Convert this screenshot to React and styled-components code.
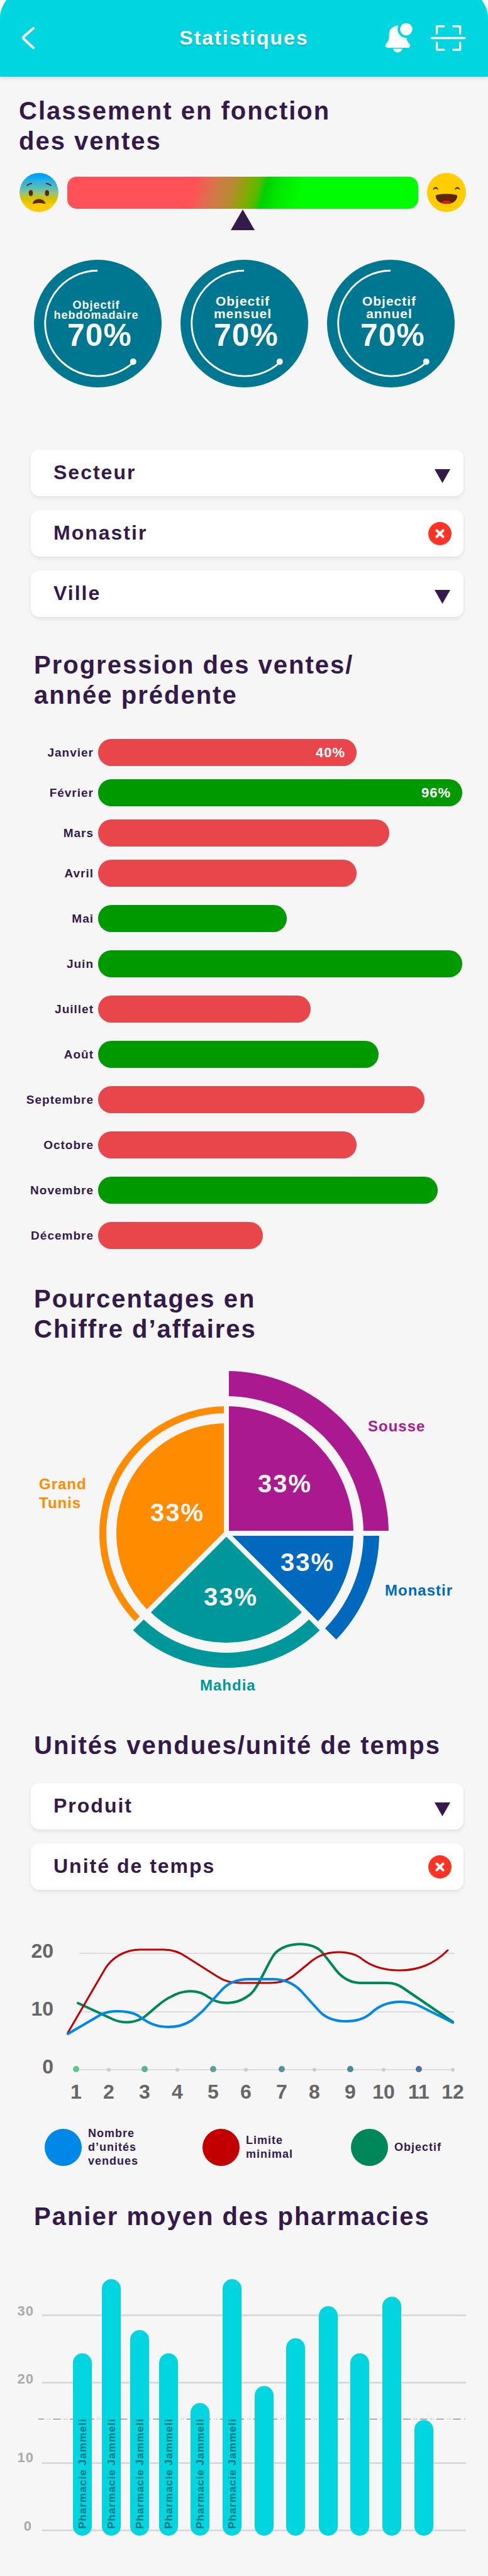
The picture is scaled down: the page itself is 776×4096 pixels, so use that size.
import React from 'react';
import styled, { createGlobalStyle } from 'styled-components';

const ink = '#34194b';
const paper = '#f6f6f6';
const cyan = '#00d5e0';
const font = '"Liberation Sans", Arial, sans-serif';

const GlobalStyle = createGlobalStyle`
  *, *::before, *::after { box-sizing: border-box; }
  body {
    margin: 0;
    background: #ffffff;
    color: ${ink};
    font-family: ${font};
    font-weight: 700;
  }
`;

const Page = styled.div`
  background: ${paper};
  clip-path: inset(-17px 0 0 0 round 46px 46px 0 0);
  padding-bottom: 16px;
`;

/* ---------- header ---------- */

const Header = styled.header`
  display: grid;
  grid-template-columns: 1fr auto 1fr;
  align-items: center;
  height: 122px;
  padding: 0 34px 2px;
  background: ${cyan};
  color: #ffffff;
  box-shadow: 0 2px 6px rgba(0, 0, 0, 0.12);
`;

const Title = styled.h1`
  margin: 0;
  font-size: 32px;
  line-height: 36px;
  letter-spacing: 2px;
  text-shadow: 0 2px 3px rgba(0, 0, 0, 0.12);
`;

const Actions = styled.div`
  display: flex;
  align-items: center;
  justify-content: flex-end;
  gap: 27px;
`;

const IconButton = styled.button`
  display: flex;
  padding: 0;
  border: 0;
  background: none;
  color: inherit;
  cursor: pointer;
`;

/* ---------- shared ---------- */

const Heading = styled.h2`
  margin: ${(p) => p.$top}px 0 0;
  padding-left: ${(p) => (p.$wide ? 30 : 54)}px;
  font-size: 40px;
  line-height: 48px;
  letter-spacing: 2px;
`;

const Chart = styled.svg`
  display: block;
  width: 100%;
  height: auto;
  margin-top: ${(p) => p.$top}px;
  font-family: ${font};
  font-weight: 700;
`;

/* ---------- gauge ---------- */

const Gauge = styled.div`
  display: grid;
  grid-template-columns: 62px 1fr 62px;
  align-items: center;
  gap: 14px;
  margin-top: 27px;
  padding: 0 35px 0 31px;
`;

const Track = styled.div`
  position: relative;
  height: 51px;
  border-radius: 15px;
  background: linear-gradient(
    106deg,
    #ff5157 36%,
    #d4774a 42%,
    #b58b30 47%,
    #84aa00 51%,
    #50be00 54%,
    #00d000 56%,
    #00e800 60%,
    #00fc00 66%
  );
`;

const Pointer = styled.svg`
  position: absolute;
  top: 100%;
  left: 50%;
  margin: 1px 0 0 -19px;
`;

/* ---------- goals ---------- */

const Goals = styled.div`
  display: flex;
  justify-content: space-between;
  margin-top: 76px;
  padding: 0 53px 0 54px;
`;

const Goal = styled.div`
  display: grid;
  width: 203px;
  height: 203px;
  border-radius: 50%;
  background: #007791;
  color: #ffffff;
  text-align: center;

  > * { grid-area: 1 / 1; }
`;

const GoalText = styled.div`
  display: flex;
  flex-direction: column;
  justify-content: flex-end;
  padding-bottom: 59px;
`;

const GoalLabel = styled.span`
  padding-right: 5px;
  font-size: ${(p) => (p.$small ? 18 : 21)}px;
  line-height: ${(p) => (p.$small ? 16 : 20)}px;
  letter-spacing: 1px;
  white-space: pre-line;
`;

const GoalValue = styled.strong`
  padding-left: 6px;
  color: ${paper};
  font-size: 50px;
  line-height: 48px;
  letter-spacing: 1px;
`;

/* ---------- filters ---------- */

const Filters = styled.div`
  display: grid;
  gap: 22px;
  margin-top: ${(p) => p.$top}px;
  padding: 0 39px 0 49px;
`;

const Field = styled.div`
  display: grid;
  align-items: center;
  height: 74px;
  border-radius: 14px;
  background: #ffffff;
  box-shadow: 0 3px 6px rgba(0, 0, 0, 0.09);

  > * { grid-area: 1 / 1; }
`;

const controlText = `
  width: 100%;
  height: 100%;
  padding: 0 72px 2px 36px;
  border: 0;
  outline: 0;
  border-radius: 14px;
  background: none;
  color: ${ink};
  font: 700 32px ${font};
  letter-spacing: 2px;
`;

const Select = styled.select`
  ${controlText}
  appearance: none;
`;

const Input = styled.input`
  ${controlText}
`;

const Arrow = styled.svg`
  justify-self: end;
  margin: 10px 21px 0 0;
  pointer-events: none;
`;

const Clear = styled.button`
  display: grid;
  place-items: center;
  justify-self: end;
  width: 37px;
  height: 37px;
  margin-right: 19px;
  padding: 0;
  border: 0;
  border-radius: 50%;
  background: #fd3425;
  cursor: pointer;
`;

/* ---------- monthly bars ---------- */

const Months = styled.ul`
  margin: 46px 0 0;
  padding: 0 41px 1px 0;
  list-style: none;
`;

const Month = styled.li`
  display: grid;
  grid-template-columns: 149px 1fr;
  align-items: center;
  gap: 7px;

  & + & { margin-top: 29px; }
  &:nth-child(n + 2):nth-child(-n + 4) { margin-top: 21px; }
`;

const MonthName = styled.span`
  font-size: 19px;
  line-height: 22px;
  letter-spacing: 1px;
  text-align: right;
`;

const Bar = styled.div`
  display: flex;
  align-items: center;
  justify-content: flex-end;
  height: 43px;
  padding-right: 18px;
  border-radius: 21px;
  background: ${(p) => (p.$up ? '#009a00' : '#e9464c')};
  color: #ffffff;
  font-size: 22px;
  letter-spacing: 1px;
`;

/* ---------- legend ---------- */

const Legend = styled.ul`
  display: grid;
  grid-template-columns: 251fr 236fr 218fr;
  margin: 31px 0 0;
  padding: 0 0 0 71px;
  list-style: none;
`;

const LegendItem = styled.li`
  display: flex;
  align-items: center;
  gap: 10px;
  height: 66px;
  font-size: 18px;
  line-height: 22px;
  letter-spacing: 1px;
  white-space: pre-line;
`;

const Swatch = styled.span`
  flex: none;
  width: 59px;
  height: 59px;
  border-radius: 50%;
  background: ${(p) => p.$color};
`;

/* ---------- data ---------- */

const goals = [
  { label: 'Objectif\nhebdomadaire', small: true },
  { label: 'Objectif\nmensuel' },
  { label: 'Objectif\nannuel' },
];

const months = [
  { name: 'Janvier', width: 71, text: '40%' },
  { name: 'Février', width: 100, up: true, text: '96%' },
  { name: 'Mars', width: 80 },
  { name: 'Avril', width: 71 },
  { name: 'Mai', width: 51.8, up: true },
  { name: 'Juin', width: 100, up: true },
  { name: 'Juillet', width: 58.4 },
  { name: 'Août', width: 77, up: true },
  { name: 'Septembre', width: 89.7 },
  { name: 'Octobre', width: 71 },
  { name: 'Novembre', width: 93.2, up: true },
  { name: 'Décembre', width: 45.2 },
];

const regions = [
  { name: ['Sousse'], color: '#ab1991', from: 0, to: 90, r: 202, ring: [218, 258], value: [410, 203], label: [585, 106] },
  { name: ['Monastir'], color: '#0069bd', from: 90, to: 135, r: 202, ring: [218, 243], value: [446, 328], label: [612, 367] },
  { name: ['Mahdia'], color: '#00979a', from: 135, to: 225, r: 174, ring: [190, 214], value: [324, 383], label: [318, 518] },
  { name: ['Grand', 'Tunis'], color: '#ff8c00', from: 225, to: 360, r: 175, ring: [191, 202], value: [239, 249], label: [62, 198] },
];

const ticks = [
  { x: 121, color: '#5cc68e' },
  { x: 173 },
  { x: 230, color: '#5ab391' },
  { x: 282 },
  { x: 339, color: '#56a295' },
  { x: 391 },
  { x: 448, color: '#529497' },
  { x: 500 },
  { x: 557, color: '#4f8699' },
  { x: 610 },
  { x: 666, color: '#4e739c' },
  { x: 720 },
];

const legend = [
  { text: 'Nombre\nd’unités\nvendues', color: '#0088e8' },
  { text: 'Limite\nminimal', color: '#c20000' },
  { text: 'Objectif', color: '#008759' },
];

const pharmacies = [
  { x: 116, top: 142, name: 'Pharmacie Jammeli' },
  { x: 162, top: 24, name: 'Pharmacie Jammeli' },
  { x: 207, top: 105, name: 'Pharmacie Jammeli' },
  { x: 253, top: 142, name: 'Pharmacie Jammeli' },
  { x: 303, top: 221, name: 'Pharmacie Jammeli' },
  { x: 354, top: 24, name: 'Pharmacie Jammeli' },
  { x: 405, top: 194 },
  { x: 455, top: 118 },
  { x: 507, top: 67 },
  { x: 557, top: 142 },
  { x: 608, top: 52 },
  { x: 659, top: 248 },
];

/* ---------- pieces ---------- */

const BackIcon = () => (
  <svg width="21" height="37" viewBox="0 0 21 37" fill="none" stroke="currentColor" strokeWidth="4" strokeLinecap="round" strokeLinejoin="round">
    <path d="M19 3 4 16Q2 18 4 20L19 34" />
  </svg>
);

const BellIcon = () => (
  <svg width="45" height="48" viewBox="33 30 188 201" fill="currentColor">
    <path d="M123 49C85 52 62 75 61 103V125C60 148 51 160 40 172C31 184 38 197 52 197H186C200 197 206 184 197 172C186 160 177 150 177 132A58 58 0 0 1 123 49Z" />
    <circle cx="175" cy="74" r="41" />
    <path d="M88 204H149C146 220 133 229 118 229C103 229 91 220 88 204Z" />
  </svg>
);

const ScanIcon = () => (
  <svg width="58" height="43" viewBox="333 38 244 182" fill="none" stroke="currentColor" strokeWidth="14" strokeLinecap="round" strokeLinejoin="round">
    <path d="M344 129H566M377 98V50H425M487 50H534V98M377 160V208H425M487 208H534V160" />
  </svg>
);

const WorriedFace = () => (
  <svg width="62" height="62" viewBox="20 17 262 262" role="img" aria-label="Mauvais">
    <defs>
      <linearGradient id="worried" x1="0" y1="0" x2="0" y2="1">
        <stop offset="0.08" stopColor="#00a2f8" />
        <stop offset="0.2" stopColor="#2aafe0" />
        <stop offset="0.38" stopColor="#55bcba" />
        <stop offset="0.52" stopColor="#98c27c" />
        <stop offset="0.65" stopColor="#d0c400" />
        <stop offset="0.85" stopColor="#ffcb00" />
      </linearGradient>
    </defs>
    <circle cx="151" cy="148" r="131" fill="url(#worried)" />
    <path d="M71 101Q84 89 101 88M200 88Q218 90 231 101" fill="none" stroke="#5b260b" strokeWidth="8" strokeLinecap="round" />
    <ellipse cx="96" cy="152" rx="14" ry="20" fill="#5b260b" />
    <ellipse cx="205" cy="152" rx="14" ry="20" fill="#5b260b" />
    <path d="M108 222C113 202 131 192 151 192C171 192 189 202 195 222C192 226 186 224 182 223C162 217 140 217 120 223C114 225 107 226 108 222Z" fill="#5b260b" />
  </svg>
);

const HappyFace = () => (
  <svg width="62" height="62" viewBox="0 0 262 262" role="img" aria-label="Excellent">
    <circle cx="131" cy="131" r="131" fill="#ffcd00" />
    <path d="M40 115C41 103 48 95 58 95S75 103 76 115Q67 106 58 106T40 115ZM186 115C187 103 194 95 204 95S221 103 222 115Q213 106 204 106T186 115Z" fill="#5b260b" />
    <path d="M58 156Q58 148 68 147Q131 135 194 147Q204 148 204 156C200 190 170 208 131 208S62 190 58 156Z" fill="#5b260b" />
    <path d="M95 201C103 190 117 186 131 186S159 190 167 201Q150 208 131 208T95 201Z" fill="#dd1a1f" />
  </svg>
);

function SelectField({ label }) {
  return (
    <Field>
      <Select aria-label={label}>
        <option>{label}</option>
      </Select>
      <Arrow width="25" height="22" viewBox="0 0 50 44" fill={ink} aria-hidden="true">
        <path d="M0 0H50L25 44Z" />
      </Arrow>
    </Field>
  );
}

function ClearableField({ label, value }) {
  return (
    <Field>
      <Input type="text" aria-label={label} defaultValue={value} />
      <Clear type="button" aria-label={`Effacer ${value}`}>
        <svg width="15" height="15" viewBox="0 0 30 30" stroke="#ffffff" strokeWidth="8" strokeLinecap="round">
          <path d="M5 5 25 25M25 5 5 25" />
        </svg>
      </Clear>
    </Field>
  );
}

const CX = 360;
const CY = 268;

const at = (r, deg) => {
  const a = (deg * Math.PI) / 180;
  return `${(CX + r * Math.sin(a)).toFixed(2)} ${(CY - r * Math.cos(a)).toFixed(2)}`;
};

const slice = ({ from, to, r }) => `M${CX} ${CY}L${at(r, from)}A${r} ${r} 0 0 1 ${at(r, to)}Z`;

const ring = ({ from, to, ring: [a, b] }) =>
  `M${at(a, from)}L${at(b, from)}A${b} ${b} 0 0 1 ${at(b, to)}L${at(a, to)}A${a} ${a} 0 0 0 ${at(a, from)}Z`;

function RegionPie() {
  return (
    <Chart $top={33} viewBox="0 0 776 540">
      {regions.map((region) => (
        <path key={region.color} d={slice(region) + ring(region)} fill={region.color} />
      ))}
      {regions.map((region) => (
        <path key={region.color} d={`M${CX} ${CY}L${at(275, region.from)}`} stroke={paper} strokeWidth="8" />
      ))}
      {regions.map((region) => (
        <g key={region.color}>
          <text x={region.value[0]} y={region.value[1]} fill={paper} fontSize="40" letterSpacing="2">33%</text>
          {region.name.map((line, i) => (
            <text key={line} x={region.label[0]} y={region.label[1] + i * 30} fill={region.color} fontSize="24" letterSpacing="1">
              {line}
            </text>
          ))}
        </g>
      ))}
    </Chart>
  );
}

function UnitsChart() {
  return (
    <Chart $top={65} viewBox="0 0 776 280">
      <g fill="#666666" fontSize="32">
        {[20, 10, 0].map((n, i) => (
          <text key={n} x="85" y={43 + i * 92} textAnchor="end">{n}</text>
        ))}
        {ticks.map((t, i) => (
          <text key={t.x} x={t.x} y="267" textAnchor="middle">{i + 1}</text>
        ))}
      </g>
      <path d="M126 36H723M126 129H723M126 221H723" stroke="#dcdcdc" strokeWidth="2" />
      {ticks.map((t) => (
        <circle key={t.x} cx={t.x} cy={t.color ? 220 : 221} r={t.color ? 5 : 3} fill={t.color || '#cccccc'} />
      ))}
      <g fill="none" strokeLinecap="round" strokeLinejoin="round">
        <path
          stroke="#008759"
          strokeWidth="4"
          d="M124 115L180 141C194 147 210 147 225 140C236 134 256 111 272 105C290 94 311 94 324 101C331 105 337 109 341 111C356 117 376 116 391 106C398 102 403 97 407 90C417 75 424 56 435 39C450 17 500 14 515 38C523 47 529 57 539 68C548 77 560 83 574 83H616C626 83 634 86 641 91L720 145"
        />
        <path
          stroke="#c20000"
          strokeWidth="3"
          d="M108 162L168 59C178 44 197 30 223 30H260C273 30 286 34 297 42L346 73C355 79 366 83 381 83H428C446 83 458 79 470 69L497 47C509 38 523 34 538 34C554 34 568 38 577 46C592 57 612 63 635 63C666 63 690 53 712 31"
        />
        <path
          stroke="#0088e8"
          strokeWidth="4"
          d="M108 164L161 133C169 129 178 128 187 128C199 128 210 130 218 134C223 137 229 142 235 145C244 150 255 153 267 153C281 153 295 149 304 143C311 138 316 133 322 128L351 96C361 84 376 77 396 77H433C452 77 466 83 478 95L507 127C516 137 531 144 551 144C566 144 579 140 589 132C598 123 613 113 637 113C649 113 659 115 668 120L720 146"
        />
      </g>
    </Chart>
  );
}

function BasketChart() {
  return (
    <Chart $top={52} viewBox="0 0 776 480">
      <g fill="#aaaaab" fontSize="22" letterSpacing="1" textAnchor="end">
        <text x="54" y="82">30</text>
        <text x="54" y="190">20</text>
        <text x="54" y="315">10</text>
        <text x="51" y="424">0</text>
      </g>
      <path d="M68 81.500H740M68 188.500H740M68 316.500H740M68 423.500H740" stroke="#dadada" strokeWidth="3" strokeLinecap="round" />
      <path d="M61 246.500H740" stroke="#75638a" strokeDasharray="12 5.500 1 2.500 1 4.500" strokeDashoffset="3" />
      {pharmacies.map((p) => (
        <g key={p.x}>
          <rect x={p.x} y={p.top} width="30" height={432 - p.top} rx="15" ry="15" fill={cyan} />
          {p.name && (
            <text transform={`translate(${p.x + 21} 421) rotate(-90)`} fill="#007380" fontSize="17" letterSpacing="1">
              {p.name}
            </text>
          )}
        </g>
      ))}
    </Chart>
  );
}

export default function App() {
  return (
    <>
      <GlobalStyle />
      <Page>
        <Header>
          <IconButton type="button" aria-label="Retour"><BackIcon /></IconButton>
          <Title>Statistiques</Title>
          <Actions>
            <IconButton type="button" aria-label="Notifications"><BellIcon /></IconButton>
            <IconButton type="button" aria-label="Scanner"><ScanIcon /></IconButton>
          </Actions>
        </Header>

        <main>
          <Heading $top={30} $wide>Classement en fonction<br />des ventes</Heading>
          <Gauge>
            <WorriedFace />
            <Track>
              <Pointer width="38" height="33" viewBox="0 0 38 33" fill={ink} aria-hidden="true">
                <path d="M19 0 38 33H0Z" />
              </Pointer>
            </Track>
            <HappyFace />
          </Gauge>

          <Goals>
            {goals.map((goal) => (
              <Goal key={goal.label}>
                <svg width="203" height="203" viewBox="0 0 283 283" fill="none" aria-hidden="true">
                  <path d="M141 24A117 117 0 1 0 220 228" stroke="#ffffff" strokeWidth="4" />
                  <circle cx="220" cy="226" r="7" fill="#ffffff" />
                </svg>
                <GoalText>
                  <GoalLabel $small={goal.small}>{goal.label}</GoalLabel>
                  <GoalValue>70%</GoalValue>
                </GoalText>
              </Goal>
            ))}
          </Goals>

          <Filters $top={99}>
            <SelectField label="Secteur" />
            <ClearableField label="Région" value="Monastir" />
            <SelectField label="Ville" />
          </Filters>

          <Heading $top={52}>Progression des ventes/<br />année prédente</Heading>
          <Months>
            {months.map((m) => (
              <Month key={m.name}>
                <MonthName>{m.name}</MonthName>
                <Bar $up={m.up} style={{ width: `${m.width}%` }}>{m.text}</Bar>
              </Month>
            ))}
          </Months>

          <Heading $top={54}>Pourcentages en<br />Chiffre d’affaires</Heading>
          <RegionPie />

          <Heading $top={41}>Unités vendues/unité de temps</Heading>
          <Filters $top={36}>
            <SelectField label="Produit" />
            <ClearableField label="Période" value="Unité de temps" />
          </Filters>
          <UnitsChart />
          <Legend>
            {legend.map((item) => (
              <LegendItem key={item.text}>
                <Swatch $color={item.color} />
                {item.text}
              </LegendItem>
            ))}
          </Legend>

          <Heading $top={53}>Panier moyen des pharmacies</Heading>
          <BasketChart />
        </main>
      </Page>
    </>
  );
}
